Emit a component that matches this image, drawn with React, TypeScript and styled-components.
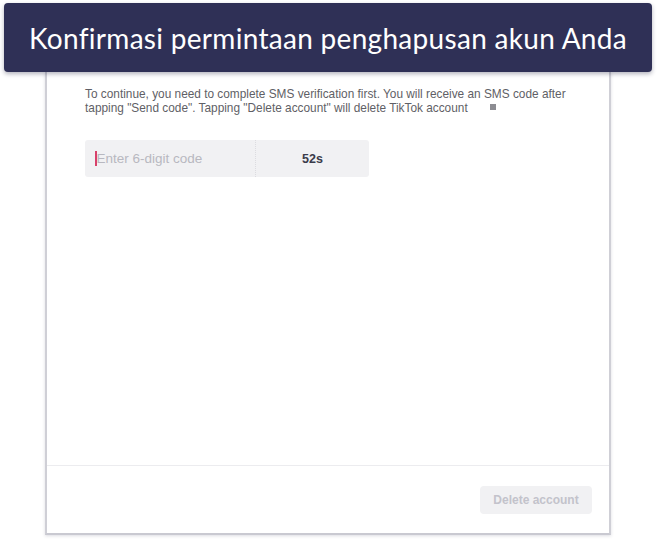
import styled, { createGlobalStyle } from 'styled-components';

const GlobalStyle = createGlobalStyle`
  html, body {
    margin: 0;
    padding: 0;
    background: #ffffff;
  }
  * {
    box-sizing: border-box;
  }
`;

const Page = styled.div`
  width: 657px;
  height: 539px;
  display: flex;
  flex-direction: column;
  overflow: hidden;
  background: #ffffff;
`;

const Banner = styled.div`
  margin: 3px 5px 0 4px;
  height: 69px;
  flex-shrink: 0;
  display: flex;
  align-items: center;
  justify-content: center;
  background: #2f3056;
  border-radius: 4px;
  box-shadow: 0 2px 4px rgba(40, 40, 70, 0.35);
  color: #ffffff;
  font-family: Lato, 'Noto Sans', sans-serif;
  font-size: 28px;
  letter-spacing: 0.3px;
  position: relative;
  z-index: 2;
`;

const Panel = styled.div`
  margin: 0 46px 4px 45px;
  flex: 1;
  display: flex;
  flex-direction: column;
  background: #ffffff;
  border-left: 2px solid #cfcfd6;
  border-right: 2px solid #cfcfd6;
  border-bottom: 2px solid #c9c9d1;
  box-shadow: 0 1px 3px rgba(60, 60, 90, 0.18);
`;

const Body = styled.div`
  flex: 1;
  padding: 15px 0 0 38px;
  font-family: 'Liberation Sans', Arial, sans-serif;
`;

const Notice = styled.p`
  margin: 0;
  width: 500px;
  font-size: 11.85px;
  line-height: 14px;
  color: #5f5f66;
`;

const Marker = styled.span`
  display: inline-block;
  width: 6px;
  height: 6px;
  margin-left: 22px;
  background: #8c8c92;
  vertical-align: 2px;
`;

const CodeField = styled.div`
  margin-top: 25px;
  width: 284px;
  height: 37px;
  display: flex;
  background: #f1f1f3;
  border-radius: 3px;
`;

const CodeInput = styled.div`
  width: 171px;
  display: flex;
  align-items: center;
  padding-left: 10px;
  border-right: 1px dotted #dcdce0;
  font-size: 13.5px;
  color: #b8b8c0;
`;

const Caret = styled.span`
  display: inline-block;
  width: 1.5px;
  height: 15px;
  background: #d8416b;
`;

const Countdown = styled.div`
  flex: 1;
  display: flex;
  align-items: center;
  justify-content: center;
  font-size: 12.5px;
  font-weight: 700;
  color: #3a3b4a;
`;

const Footer = styled.div`
  height: 68px;
  flex-shrink: 0;
  display: flex;
  justify-content: flex-end;
  align-items: flex-start;
  padding: 20px 17px 0 0;
  border-top: 1px solid #ececef;
`;

const DeleteButton = styled.button`
  width: 112px;
  height: 28px;
  border: none;
  border-radius: 4px;
  background: #f1f1f3;
  color: #c3c3cb;
  font-family: 'Liberation Sans', Arial, sans-serif;
  font-size: 12px;
  font-weight: 700;
  cursor: not-allowed;
`;

const App = () => {
  return (
    <Page>
      <GlobalStyle />
      <Banner>Konfirmasi permintaan penghapusan akun Anda</Banner>
      <Panel>
        <Body>
          <Notice>
            To continue, you need to complete SMS verification first. You will receive an SMS code after
            tapping "Send code". Tapping "Delete account" will delete TikTok account
            <Marker />
          </Notice>
          <CodeField>
            <CodeInput>
              <Caret />
              Enter 6-digit code
            </CodeInput>
            <Countdown>52s</Countdown>
          </CodeField>
        </Body>
        <Footer>
          <DeleteButton disabled>Delete account</DeleteButton>
        </Footer>
      </Panel>
    </Page>
  );
};

export default App;
